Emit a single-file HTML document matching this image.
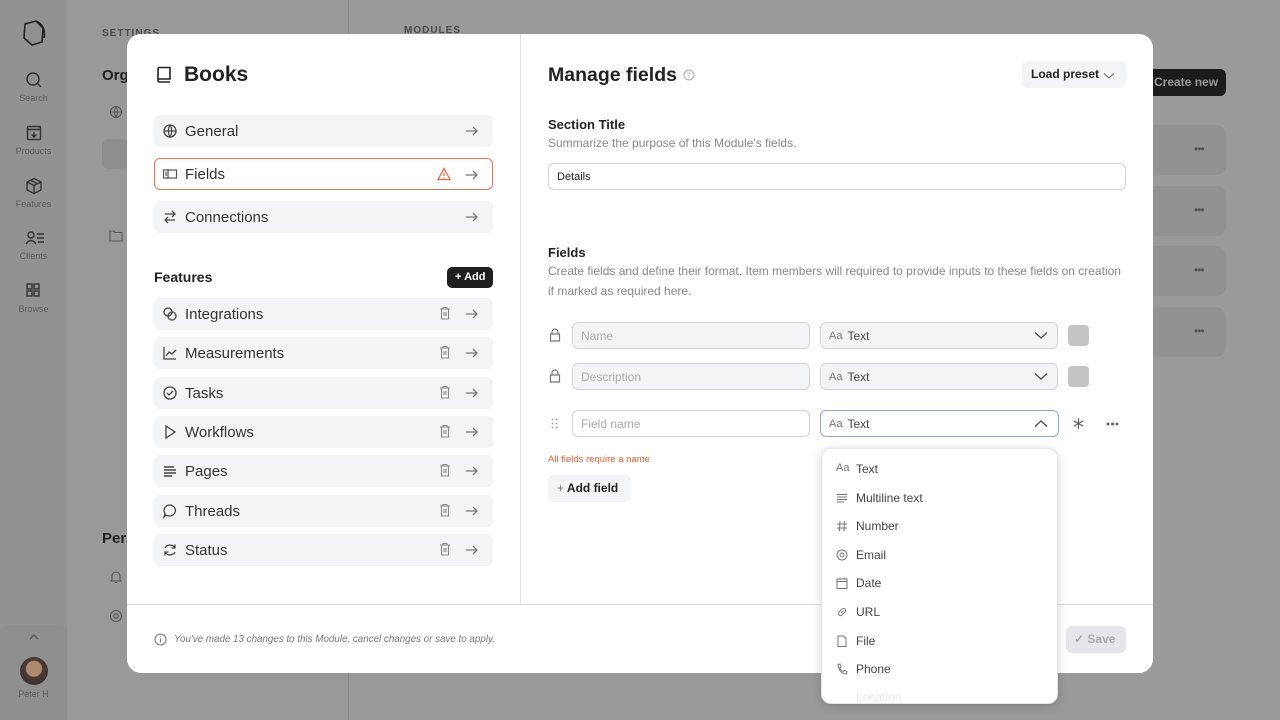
<!DOCTYPE html>
<html><head><meta charset="utf-8"><style>
*{box-sizing:border-box;margin:0;padding:0}
body{width:1280px;height:720px;overflow:hidden;background:#9a9a9a;font-family:"Liberation Sans",sans-serif;position:relative;color:#222}
.abs{position:absolute}
.sb{left:0;top:0;width:67px;height:720px;background:#929292}
.sbl{font-size:9px;color:#5a5a5a;width:67px;text-align:center}
.set{left:67px;top:0;width:282px;height:720px;background:#999;border-right:1px solid #858585}
.modal{left:127px;top:34px;width:1026px;height:639px;background:#fff;border-radius:14px;overflow:hidden}
.row{position:absolute;left:27px;width:339px;height:32px;background:#f3f4f6;border-radius:6px;font-size:15px;color:#333;display:flex;align-items:center}
.row .ic{position:absolute;left:8px;top:8px}
.row .t{position:absolute;left:31px}
.row .ar{position:absolute;right:14px;top:9px}
.row .tr{position:absolute;right:42px;top:8px}
svg{display:block}
.inp{position:absolute;height:27px;border:1px solid #d4d4d8;border-radius:6px;font-size:12px;display:flex;align-items:center;padding-left:8px}
.dd{position:absolute;left:821px;top:448px;width:237px;height:256px;background:#fff;border-radius:10px;box-shadow:0 2px 10px rgba(0,0,0,.18);border:1px solid #e5e5e5}
.di{position:absolute;left:14px;height:12px;width:200px;font-size:12px;color:#444}
.di svg{position:absolute;left:0;top:0}
.di span{position:absolute;left:20px;top:-1px;white-space:nowrap}
.dots{font-size:12px;color:#555;letter-spacing:-1px}
</style></head><body>
<div class="abs sb"></div>
<div class="abs set"></div>
<svg class="abs" style="left:20px;top:18px" width="28" height="30" viewBox="0 0 28 30"><path d="M5 6 L16 3 L23 10 L22 24 L12 27 L4 20 Z M16 3 Q24 7 24 14 M19 5 Q26 10 24 20" fill="none" stroke="#222" stroke-width="1.6"/></svg>
<svg class="abs" style="left:25px;top:71px" width="18" height="18"><circle cx="8" cy="8" r="6" fill="none" stroke="#333" stroke-width="1.5"/><path d="M12.5 12.5 L16 16" stroke="#333" stroke-width="1.5"/></svg>
<div class="abs sbl" style="top:93px">Search</div>
<svg class="abs" style="left:26px;top:125px" width="16" height="16"><rect x="1.5" y="1.5" width="13" height="13" rx="1" fill="none" stroke="#333" stroke-width="1.5"/><path d="M1.5 4.5 H14.5 M8 7 V12 M5.5 9.5 L8 12 L10.5 9.5" fill="none" stroke="#333" stroke-width="1.4"/></svg>
<div class="abs sbl" style="top:146px">Products</div>
<svg class="abs" style="left:25px;top:177px" width="18" height="18"><path d="M9 1.5 L16 5 V13 L9 16.5 L2 13 V5 Z M2 5 L9 8.5 L16 5 M9 8.5 V16.5 M5.5 3.2 L12.5 6.8" fill="none" stroke="#333" stroke-width="1.4"/></svg>
<div class="abs sbl" style="top:199px">Features</div>
<svg class="abs" style="left:25px;top:231px" width="20" height="14"><circle cx="6" cy="4" r="3" fill="none" stroke="#333" stroke-width="1.4"/><path d="M1 13 Q6 6 11 13 M12 3 H19 M12 7 H19 M13 11 H19" fill="none" stroke="#333" stroke-width="1.4"/></svg>
<div class="abs sbl" style="top:251px">Clients</div>
<svg class="abs" style="left:26px;top:283px" width="14" height="14"><rect x="1" y="1" width="5" height="5" fill="none" stroke="#333" stroke-width="1.4"/><rect x="8" y="1" width="5" height="5" fill="none" stroke="#333" stroke-width="1.4"/><rect x="1" y="8" width="5" height="5" fill="none" stroke="#333" stroke-width="1.4"/><rect x="8" y="8" width="5" height="5" fill="none" stroke="#333" stroke-width="1.4"/></svg>
<div class="abs sbl" style="top:304px">Browse</div>
<div class="abs" style="left:0;top:625px;width:67px;height:95px;background:#8f8f8f;border-radius:8px 8px 0 0"></div>
<svg class="abs" style="left:28px;top:633px" width="12" height="8"><path d="M2 6 L6 2 L10 6" fill="none" stroke="#555" stroke-width="1.3"/></svg>
<div class="abs" style="left:20px;top:657px;width:28px;height:28px;border-radius:50%;background:radial-gradient(circle at 50% 42%,#b08a70 0 35%,#4a3a35 40%,#2d2a30 100%)"></div>
<div class="abs sbl" style="top:689px">Peter H</div>
<div class="abs" style="left:102px;top:28px;font-size:10px;letter-spacing:1px;color:#4a4a4a;font-weight:bold">SETTINGS</div>
<div class="abs" style="left:102px;top:67px;font-size:15px;font-weight:bold;color:#222">Orga</div>
<div class="abs" style="left:102px;top:530px;font-size:15px;font-weight:bold;color:#222">Pers</div>
<div class="abs" style="left:102px;top:139px;width:30px;height:30px;background:#8e8e8e;border-radius:6px"></div>
<svg class="abs" style="left:109px;top:105px" width="14" height="14"><circle cx="7" cy="7" r="5.5" fill="none" stroke="#555" stroke-width="1.1"/><path d="M1.5 7 H12.5 M7 1.5 Q4 7 7 12.5 Q10 7 7 1.5" fill="none" stroke="#555" stroke-width="1"/></svg>
<svg class="abs" style="left:109px;top:229px" width="14" height="13"><path d="M1 2 H5 L6 3.5 H13 V12 H1 Z" fill="none" stroke="#555" stroke-width="1.1"/></svg>
<svg class="abs" style="left:109px;top:570px" width="14" height="14"><path d="M3 10 V6 A4 4 0 0 1 11 6 V10 L12 11 H2 Z M6 12.5 H8" fill="none" stroke="#555" stroke-width="1.1"/></svg>
<svg class="abs" style="left:109px;top:609px" width="14" height="14"><circle cx="7" cy="7" r="5.5" fill="none" stroke="#555" stroke-width="1.1"/><circle cx="7" cy="7" r="2.2" fill="none" stroke="#555" stroke-width="1.1"/></svg>
<div class="abs" style="left:404px;top:25px;font-size:10px;letter-spacing:1px;color:#4a4a4a;font-weight:bold">MODULES</div>
<div class="abs" style="left:1140px;top:69px;width:86px;height:27px;background:#1c1c1c;border-radius:6px;color:#999;font-size:12px;font-weight:bold;padding:6px 0 0 14px">Create new</div>
<div class="abs" style="left:1140px;top:125px;width:86px;height:50px;background:#929292;border-radius:10px"></div>
<div class="abs" style="left:1140px;top:186px;width:86px;height:50px;background:#929292;border-radius:10px"></div>
<div class="abs" style="left:1140px;top:246px;width:86px;height:50px;background:#929292;border-radius:10px"></div>
<div class="abs" style="left:1140px;top:307px;width:86px;height:50px;background:#929292;border-radius:10px"></div>
<div class="abs dots" style="left:1194px;top:142px">•••</div>
<div class="abs dots" style="left:1194px;top:203px">•••</div>
<div class="abs dots" style="left:1194px;top:263px">•••</div>
<div class="abs dots" style="left:1194px;top:324px">•••</div>

<div class="abs modal">
 <div class="abs" style="left:393px;top:0;width:1px;height:570px;background:#e2e2e6"></div>
 <div class="abs" style="left:0;top:570px;width:1026px;height:1px;background:#dcdce0"></div>
 <svg class="abs" style="left:29px;top:32px" width="16" height="18"><path d="M2 15 V3 Q2 1.5 3.5 1.5 H14 V13 H3.5 Q2 13 2 14.5 Q2 16 3.5 16 H14" fill="none" stroke="#222" stroke-width="1.6"/></svg>
 <div class="abs" style="left:57px;top:29px;font-size:21px;font-weight:bold;color:#222">Books</div>

 <div class="row" style="top:81px"><svg class="ic" width="16" height="16"><circle cx="8" cy="8" r="6" fill="none" stroke="#444" stroke-width="1.3"/><path d="M2 8 H14 M8 2 Q4.5 8 8 14 Q11.5 8 8 2" fill="none" stroke="#444" stroke-width="1.2"/></svg><span class="t">General</span><svg class="ar" width="14" height="14"><path d="M1 7 H12 M8 3 L12 7 L8 11" fill="none" stroke="#777" stroke-width="1.3"/></svg></div>
 <div class="row" style="top:124px;background:#fff;border:1px solid #e07a5a"><svg class="ic" style="top:7px;left:7px" width="16" height="16"><rect x="1.5" y="4" width="13" height="8" fill="none" stroke="#555" stroke-width="1.2"/><path d="M6 3 V13 M4 6 V10" stroke="#555" stroke-width="1.2"/></svg><span class="t" style="left:30px">Fields</span><svg class="tr" style="top:8px;right:41px" width="14" height="14"><path d="M7 1.5 L13 12.5 H1 Z M7 5.5 V9 M7 10.5 V11.5" fill="none" stroke="#e06a45" stroke-width="1.3"/></svg><svg class="ar" style="right:13px" width="14" height="14"><path d="M1 7 H12 M8 3 L12 7 L8 11" fill="none" stroke="#777" stroke-width="1.3"/></svg></div>
 <div class="row" style="top:167px"><svg class="ic" width="16" height="16"><path d="M3 5 H13 M10 2 L13 5 L10 8 M13 11 H3 M6 8 L3 11 L6 14" fill="none" stroke="#444" stroke-width="1.3"/></svg><span class="t">Connections</span><svg class="ar" width="14" height="14"><path d="M1 7 H12 M8 3 L12 7 L8 11" fill="none" stroke="#777" stroke-width="1.3"/></svg></div>

 <div class="abs" style="left:27px;top:235px;font-size:14px;font-weight:bold;color:#222">Features</div>
 <div class="abs" style="left:320px;top:233px;width:46px;height:21px;background:#1f1f1f;border-radius:5px;color:#fff;font-size:11px;font-weight:bold;padding:4px 0 0 8px">+ Add</div>

 <div class="row" style="top:264px"><svg class="ic" width="16" height="16"><circle cx="6" cy="6" r="4" fill="none" stroke="#444" stroke-width="1.3"/><circle cx="10" cy="10" r="4" fill="none" stroke="#444" stroke-width="1.3"/></svg><span class="t">Integrations</span><svg class="tr" width="12" height="14"><path d="M1 3 H11 M4 3 V1.5 H8 V3 M2.5 3 V13 H9.5 V3 M5 6 V10 M7 6 V10" fill="none" stroke="#888" stroke-width="1.1"/></svg><svg class="ar" width="14" height="14"><path d="M1 7 H12 M8 3 L12 7 L8 11" fill="none" stroke="#777" stroke-width="1.3"/></svg></div>
 <div class="row" style="top:303px"><svg class="ic" width="16" height="16"><path d="M2 2 V14 H14 M4 11 L7 7 L10 9 L14 5" fill="none" stroke="#444" stroke-width="1.3"/></svg><span class="t">Measurements</span><svg class="tr" width="12" height="14"><path d="M1 3 H11 M4 3 V1.5 H8 V3 M2.5 3 V13 H9.5 V3 M5 6 V10 M7 6 V10" fill="none" stroke="#888" stroke-width="1.1"/></svg><svg class="ar" width="14" height="14"><path d="M1 7 H12 M8 3 L12 7 L8 11" fill="none" stroke="#777" stroke-width="1.3"/></svg></div>
 <div class="row" style="top:343px"><svg class="ic" width="16" height="16"><circle cx="8" cy="8" r="6" fill="none" stroke="#444" stroke-width="1.3"/><path d="M5 8 L7 10 L11 6" fill="none" stroke="#444" stroke-width="1.3"/></svg><span class="t">Tasks</span><svg class="tr" width="12" height="14"><path d="M1 3 H11 M4 3 V1.5 H8 V3 M2.5 3 V13 H9.5 V3 M5 6 V10 M7 6 V10" fill="none" stroke="#888" stroke-width="1.1"/></svg><svg class="ar" width="14" height="14"><path d="M1 7 H12 M8 3 L12 7 L8 11" fill="none" stroke="#777" stroke-width="1.3"/></svg></div>
 <div class="row" style="top:382px"><svg class="ic" width="16" height="16"><path d="M4 2 L13 8 L4 14 Z" fill="none" stroke="#444" stroke-width="1.3"/></svg><span class="t">Workflows</span><svg class="tr" width="12" height="14"><path d="M1 3 H11 M4 3 V1.5 H8 V3 M2.5 3 V13 H9.5 V3 M5 6 V10 M7 6 V10" fill="none" stroke="#888" stroke-width="1.1"/></svg><svg class="ar" width="14" height="14"><path d="M1 7 H12 M8 3 L12 7 L8 11" fill="none" stroke="#777" stroke-width="1.3"/></svg></div>
 <div class="row" style="top:421px"><svg class="ic" width="16" height="16"><path d="M2 4 H12 M2 7 H14 M2 10 H14 M2 13 H10" fill="none" stroke="#444" stroke-width="1.4"/></svg><span class="t">Pages</span><svg class="tr" width="12" height="14"><path d="M1 3 H11 M4 3 V1.5 H8 V3 M2.5 3 V13 H9.5 V3 M5 6 V10 M7 6 V10" fill="none" stroke="#888" stroke-width="1.1"/></svg><svg class="ar" width="14" height="14"><path d="M1 7 H12 M8 3 L12 7 L8 11" fill="none" stroke="#777" stroke-width="1.3"/></svg></div>
 <div class="row" style="top:461px"><svg class="ic" width="16" height="16"><path d="M8 2 A6 5.5 0 1 1 4 12 L2 14 L3 10.5 A6 5.5 0 0 1 8 2 Z" fill="none" stroke="#444" stroke-width="1.3"/></svg><span class="t">Threads</span><svg class="tr" width="12" height="14"><path d="M1 3 H11 M4 3 V1.5 H8 V3 M2.5 3 V13 H9.5 V3 M5 6 V10 M7 6 V10" fill="none" stroke="#888" stroke-width="1.1"/></svg><svg class="ar" width="14" height="14"><path d="M1 7 H12 M8 3 L12 7 L8 11" fill="none" stroke="#777" stroke-width="1.3"/></svg></div>
 <div class="row" style="top:500px"><svg class="ic" width="16" height="16"><path d="M13 6 A5.5 5 0 0 0 3 6 M3 10 A5.5 5 0 0 0 13 10 M13 2.5 V6 H9.5 M3 13.5 V10 H6.5" fill="none" stroke="#444" stroke-width="1.3"/></svg><span class="t">Status</span><svg class="tr" width="12" height="14"><path d="M1 3 H11 M4 3 V1.5 H8 V3 M2.5 3 V13 H9.5 V3 M5 6 V10 M7 6 V10" fill="none" stroke="#888" stroke-width="1.1"/></svg><svg class="ar" width="14" height="14"><path d="M1 7 H12 M8 3 L12 7 L8 11" fill="none" stroke="#777" stroke-width="1.3"/></svg></div>

 <svg class="abs" style="left:27px;top:599px" width="13" height="13"><circle cx="6.5" cy="6.5" r="5.5" fill="none" stroke="#777" stroke-width="1"/><path d="M6.5 5.5 V9.5 M6.5 3.5 V4.3" stroke="#777" stroke-width="1.1"/></svg>
 <div class="abs" style="left:47px;top:600px;font-size:9.8px;font-style:italic;color:#777">You've made 13 changes to this Module, cancel changes or save to apply.</div>
 <div class="abs" style="left:939px;top:592px;width:60px;height:27px;background:#e4e6ec;border-radius:6px;color:#aaa;font-size:12px;font-weight:bold;padding:6px 0 0 8px">✓ Save</div>

 <div class="abs" style="left:421px;top:30px;font-size:19.5px;font-weight:bold;color:#222">Manage fields</div>
 <svg class="abs" style="left:556px;top:35px" width="12" height="12"><circle cx="6" cy="6" r="5" fill="none" stroke="#aaa" stroke-width="1"/><text x="3.8" y="8.6" font-size="7" fill="#aaa" font-family="Liberation Sans">?</text></svg>
 <div class="abs" style="left:895px;top:27px;width:104px;height:27px;background:#f3f4f6;border-radius:6px;font-size:12px;font-weight:bold;color:#222;padding:6px 0 0 9px">Load preset</div>
 <svg class="abs" style="left:976px;top:38px" width="12" height="8"><path d="M1 1.5 L6 6 L11 1.5" fill="none" stroke="#777" stroke-width="1.2"/></svg>

 <div class="abs" style="left:421px;top:83px;font-size:13px;font-weight:bold;color:#222">Section Title</div>
 <div class="abs" style="left:421px;top:102px;font-size:12px;color:#888">Summarize the purpose of this Module's fields.</div>
 <div class="inp" style="left:421px;top:129px;width:578px;color:#222;font-size:11px">Details</div>

 <div class="abs" style="left:421px;top:211px;font-size:13px;font-weight:bold;color:#222">Fields</div>
 <div class="abs" style="left:421px;top:227px;width:582px;font-size:12px;color:#888;line-height:20px">Create fields and define their format. Item members will required to provide inputs to these fields on creation if marked as required here.</div>
</div>

<svg class="abs" style="left:549px;top:328px" width="12" height="14"><path d="M3 6 V4 A3 3 0 0 1 9 4 V6 M1.5 6 H10.5 V13 H1.5 Z" fill="none" stroke="#777" stroke-width="1.2"/></svg>
<svg class="abs" style="left:549px;top:369px" width="12" height="14"><path d="M3 6 V4 A3 3 0 0 1 9 4 V6 M1.5 6 H10.5 V13 H1.5 Z" fill="none" stroke="#777" stroke-width="1.2"/></svg>
<div class="inp" style="left:572px;top:322px;width:238px;background:#f3f4f6;color:#aaa">Name</div>
<div class="inp" style="left:572px;top:363px;width:238px;background:#f3f4f6;color:#aaa">Description</div>
<div class="inp" style="left:820px;top:322px;width:238px;background:#f3f4f6;color:#444"><span style="color:#777;font-size:11px;margin-right:5px">Aa</span>Text</div>
<div class="inp" style="left:820px;top:363px;width:238px;background:#f3f4f6;color:#444"><span style="color:#777;font-size:11px;margin-right:5px">Aa</span>Text</div>
<svg class="abs" style="left:1034px;top:331px" width="14" height="9"><path d="M1 1.5 L7 7 L13 1.5" fill="none" stroke="#555" stroke-width="1.4"/></svg>
<svg class="abs" style="left:1034px;top:372px" width="14" height="9"><path d="M1 1.5 L7 7 L13 1.5" fill="none" stroke="#555" stroke-width="1.4"/></svg>
<div class="abs" style="left:1068px;top:325px;width:21px;height:21px;background:#c4c4c4;border-radius:4px"></div>
<div class="abs" style="left:1068px;top:366px;width:21px;height:21px;background:#c4c4c4;border-radius:4px"></div>

<svg class="abs" style="left:551px;top:418px" width="7" height="11"><g fill="#999"><circle cx="1.5" cy="1.5" r="0.9"/><circle cx="5.5" cy="1.5" r="0.9"/><circle cx="1.5" cy="5.5" r="0.9"/><circle cx="5.5" cy="5.5" r="0.9"/><circle cx="1.5" cy="9.5" r="0.9"/><circle cx="5.5" cy="9.5" r="0.9"/></g></svg>
<div class="inp" style="left:572px;top:410px;width:238px;background:#fff;color:#aaa">Field name</div>
<div class="inp" style="left:820px;top:410px;width:239px;background:#fff;color:#444;border:1px solid #8fa8d8"><span style="color:#777;font-size:11px;margin-right:5px">Aa</span>Text</div>
<svg class="abs" style="left:1034px;top:419px" width="14" height="9"><path d="M1 7.5 L7 2 L13 7.5" fill="none" stroke="#555" stroke-width="1.4"/></svg>
<svg class="abs" style="left:1072px;top:417px" width="13" height="13"><path d="M6.5 1 V12 M1.8 3.8 L11.2 9.2 M11.2 3.8 L1.8 9.2" stroke="#666" stroke-width="1.2"/></svg>
<svg class="abs" style="left:1106px;top:422px" width="13" height="4"><g fill="#666"><circle cx="2" cy="2" r="1.5"/><circle cx="6.5" cy="2" r="1.5"/><circle cx="11" cy="2" r="1.5"/></g></svg>
<div class="abs" style="left:548px;top:454px;font-size:9.5px;color:#e0603a">All fields require a name</div>
<div class="abs" style="left:548px;top:475px;width:83px;height:27px;background:#f3f4f6;border-radius:6px;font-size:12px;font-weight:bold;color:#222;padding:6px 0 0 9px"><span style="color:#777;font-weight:normal">+</span> Add field</div>

<div class="dd">
 <div class="di" style="top:14px"><span style="left:0;color:#777;font-size:11px">Aa</span><span>Text</span></div>
 <div class="di" style="top:43px"><svg width="12" height="12"><path d="M1 2.5 H11 M1 5 H11 M1 7.5 H11 M1 10 H8" stroke="#777" stroke-width="1.1"/></svg><span>Multiline text</span></div>
 <div class="di" style="top:71px"><svg width="12" height="12"><path d="M4 1 L3.5 11 M8.5 1 L8 11 M1 4 H11 M1 8 H11" stroke="#777" stroke-width="1"/></svg><span>Number</span></div>
 <div class="di" style="top:100px"><svg width="12" height="12"><circle cx="6" cy="6" r="5" fill="none" stroke="#777" stroke-width="1"/><circle cx="6" cy="6" r="2" fill="none" stroke="#777" stroke-width="1"/></svg><span>Email</span></div>
 <div class="di" style="top:128px"><svg width="12" height="12"><rect x="1" y="2" width="10" height="9.5" fill="none" stroke="#777" stroke-width="1"/><path d="M1 4.5 H11 M4 0.5 V2 M8 0.5 V2" stroke="#777" stroke-width="1"/></svg><span>Date</span></div>
 <div class="di" style="top:157px"><svg width="12" height="12"><path d="M5 7 L7 5 M4.5 4.5 L6 3 A2 2 0 0 1 9 6 L7.5 7.5 M4.5 4.5 L3 6 A2 2 0 0 0 6 9 L7.5 7.5" fill="none" stroke="#777" stroke-width="1"/></svg><span>URL</span></div>
 <div class="di" style="top:186px"><svg width="12" height="12"><path d="M2 1 H7.5 L10 3.5 V11.5 H2 Z" fill="none" stroke="#777" stroke-width="1"/></svg><span>File</span></div>
 <div class="di" style="top:214px"><svg width="12" height="12"><path d="M2 1.5 L4 1 L5 4 L3.8 5 Q5 8 7.5 8.5 L8.5 7.3 L11 8.5 L10.5 11 Q3 10.5 2 1.5 Z" fill="none" stroke="#777" stroke-width="1"/></svg><span>Phone</span></div>
 <div class="di" style="top:242px;opacity:.12"><span>Location</span></div>
</div>
</body></html>
